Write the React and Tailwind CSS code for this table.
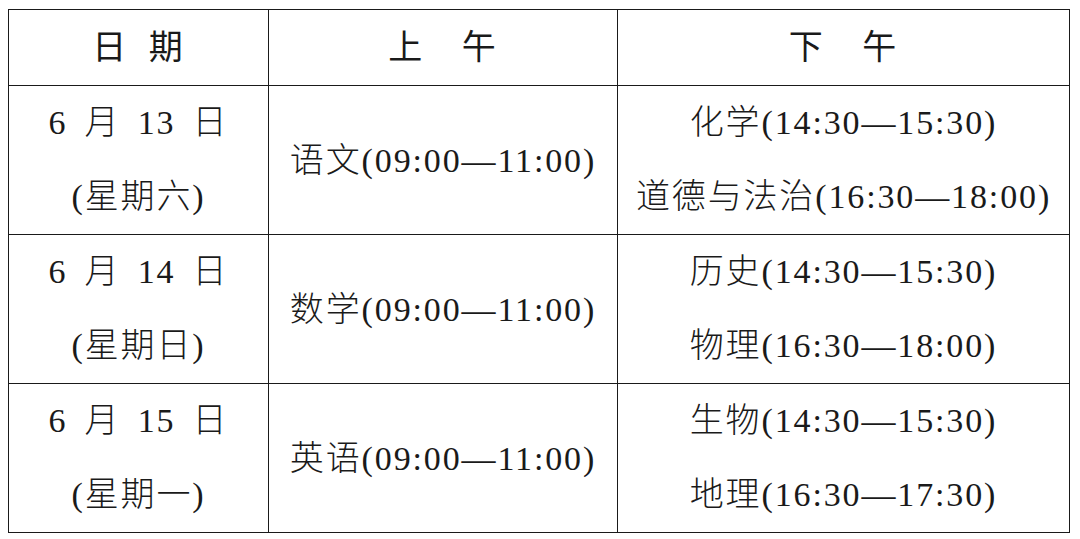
import React from 'react';

const rows = [
  {
    date: '6 月 13 日',
    week: '(星期六)',
    am: '语文(09:00—11:00)',
    pm: ['化学(14:30—15:30)', '道德与法治(16:30—18:00)'],
  },
  {
    date: '6 月 14 日',
    week: '(星期日)',
    am: '数学(09:00—11:00)',
    pm: ['历史(14:30—15:30)', '物理(16:30—18:00)'],
  },
  {
    date: '6 月 15 日',
    week: '(星期一)',
    am: '英语(09:00—11:00)',
    pm: ['生物(14:30—15:30)', '地理(16:30—17:30)'],
  },
];

const font = { fontFamily: '"Liberation Serif", "Noto Sans CJK SC", serif' };

export default function App() {
  return (
    <div className="w-[1080px] h-[539px] bg-white pl-2 pt-[9px]" style={font}>
      <table className="border-collapse border-[1.5px] border-[#1a1a1a] text-[#1a1a1a] text-[34px] font-light tracking-[0.055em] [word-spacing:0.2em]">
        <thead>
          <tr className="h-[76px]">
            <th className="w-[260px] border border-[#1a1a1a] font-normal text-center [word-spacing:0.3em]">日 期</th>
            <th className="w-[349px] border border-[#1a1a1a] font-normal text-center [word-spacing:0.8em]">上 午</th>
            <th className="w-[452px] border border-[#1a1a1a] font-normal text-center [word-spacing:0.8em]">下 午</th>
          </tr>
        </thead>
        <tbody>
          {rows.map((r) => (
            <tr key={r.date} className="h-[148px]">
              <td className="border border-[#1a1a1a] text-center leading-[74px]">
                <div>{r.date}</div>
                <div>{r.week}</div>
              </td>
              <td className="border border-[#1a1a1a] text-center">{r.am}</td>
              <td className="border border-[#1a1a1a] text-center leading-[74px]">
                {r.pm.map((p) => (
                  <div key={p}>{p}</div>
                ))}
              </td>
            </tr>
          ))}
        </tbody>
      </table>
    </div>
  );
}
